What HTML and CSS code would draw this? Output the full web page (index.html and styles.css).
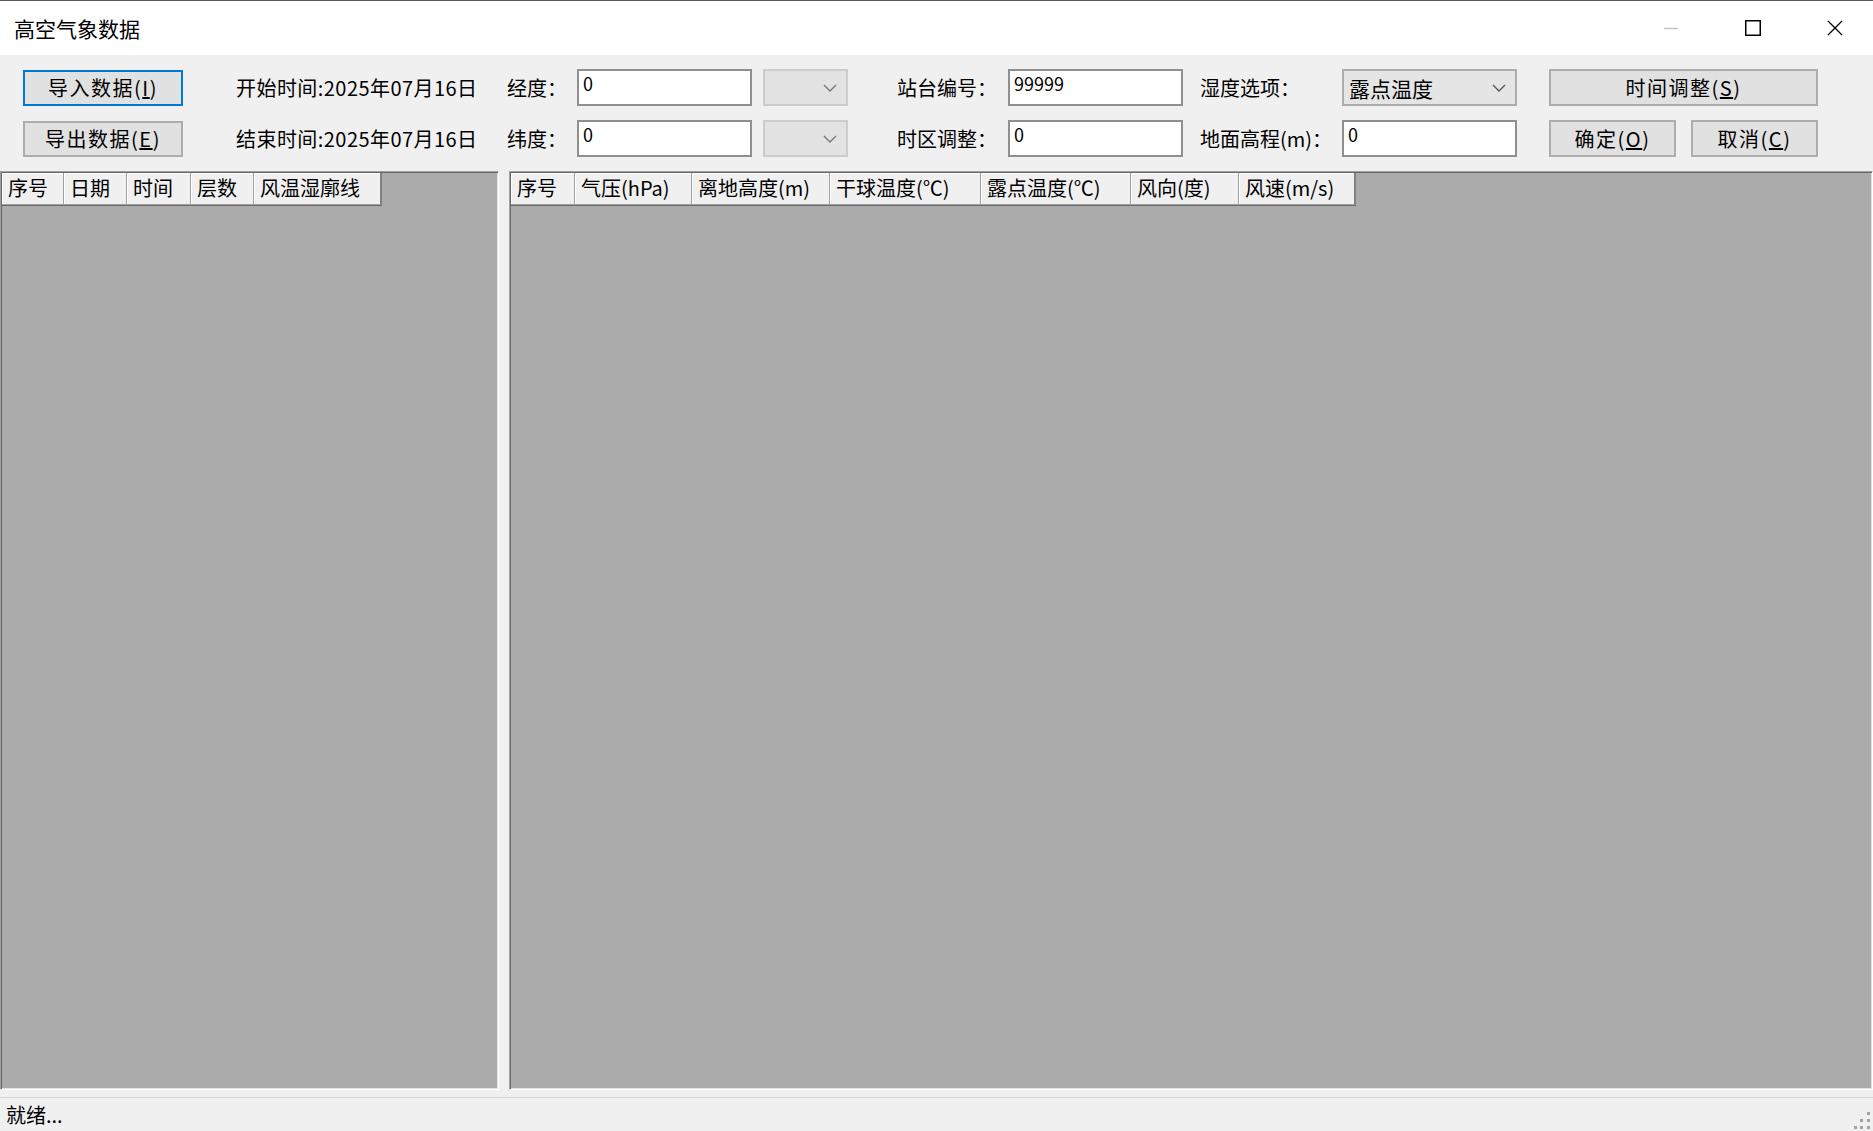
FILE: index.html
```html
<!DOCTYPE html>
<html lang="zh-CN">
<head>
    <meta charset="UTF-8">
    <title>高空气象数据</title>
    <link rel="stylesheet" href="styles.css">
</head>
<body>
    <div class="window">
        <div class="titlebar">
            <span class="title">高空气象数据</span>
            <div class="caption">
                <div class="cap-btn">
                    <svg width="16" height="16" viewBox="0 0 16 16"><line x1="1" y1="8.5" x2="15" y2="8.5" stroke="#c4c4c4" stroke-width="1.5"/></svg>
                </div>
                <div class="cap-btn">
                    <svg width="16" height="16" viewBox="0 0 16 16"><rect x="0.75" y="0.75" width="14.5" height="14.5" fill="none" stroke="#000" stroke-width="1.5"/></svg>
                </div>
                <div class="cap-btn">
                    <svg width="16" height="16" viewBox="0 0 16 16"><path d="M1 1 L15 15 M15 1 L1 15" stroke="#000" stroke-width="1.3"/></svg>
                </div>
            </div>
        </div>

        <div class="toolbar">
            <button class="btn btn-default">导入数据(<u>I</u>)</button>
            <span class="label pad-date">开始时间:2025年07月16日</span>
            <span class="label">经度：</span>
            <input class="field" type="text" value="0">
            <div class="combo combo-off pad-combo"><svg class="chev" width="14" height="8" viewBox="0 0 14 8"><path d="M1 1 L7 7 L13 1" fill="none" stroke="#777" stroke-width="1.4"/></svg></div>
            <span class="label pad-station">站台编号：</span>
            <input class="field" type="text" value="99999">
            <span class="label pad-hum">湿度选项：</span>
            <div class="combo"><span class="combo-text">露点温度</span><svg class="chev" width="14" height="8" viewBox="0 0 14 8"><path d="M1 1 L7 7 L13 1" fill="none" stroke="#555" stroke-width="1.4"/></svg></div>
            <div class="btn-cell"><button class="btn btn-wide">时间调整(<u>S</u>)</button></div>

            <button class="btn">导出数据(<u>E</u>)</button>
            <span class="label pad-date">结束时间:2025年07月16日</span>
            <span class="label">纬度：</span>
            <input class="field" type="text" value="0">
            <div class="combo combo-off pad-combo"><svg class="chev" width="14" height="8" viewBox="0 0 14 8"><path d="M1 1 L7 7 L13 1" fill="none" stroke="#777" stroke-width="1.4"/></svg></div>
            <span class="label pad-station">时区调整：</span>
            <input class="field" type="text" value="0">
            <span class="label pad-hum">地面高程(m)：</span>
            <input class="field" type="text" value="0">
            <div class="btn-cell btn-pair">
                <button class="btn">确定(<u>O</u>)</button>
                <button class="btn">取消(<u>C</u>)</button>
            </div>
        </div>

        <div class="main">
            <div class="panel panel-left">
                <div class="header">
                    <div class="col" style="width: 62px">序号</div>
                    <div class="col" style="width: 63px">日期</div>
                    <div class="col" style="width: 64px">时间</div>
                    <div class="col" style="width: 63px">层数</div>
                    <div class="col" style="width: 128px">风温湿廓线</div>
                </div>
            </div>
            <div class="panel panel-right">
                <div class="header">
                    <div class="col" style="width: 64px">序号</div>
                    <div class="col" style="width: 117px">气压(hPa)</div>
                    <div class="col" style="width: 138px">离地高度(m)</div>
                    <div class="col" style="width: 151px">干球温度(℃)</div>
                    <div class="col" style="width: 150px">露点温度(℃)</div>
                    <div class="col" style="width: 108px">风向(度)</div>
                    <div class="col" style="width: 117px">风速(m/s)</div>
                </div>
            </div>
        </div>

        <div class="statusbar">
            <span class="status-text">就绪...</span>
            <svg class="grip" width="16" height="18" viewBox="0 0 16 18">
                <rect x="13" y="1" width="3" height="3" fill="#a3a3a3"/>
                <rect x="6" y="8" width="3" height="3" fill="#a3a3a3"/>
                <rect x="13" y="8" width="3" height="3" fill="#a3a3a3"/>
                <rect x="0" y="15" width="3" height="3" fill="#a3a3a3"/>
                <rect x="6" y="15" width="3" height="3" fill="#a3a3a3"/>
                <rect x="13" y="15" width="3" height="3" fill="#a3a3a3"/>
            </svg>
        </div>
    </div>
</body>
</html>
```

FILE: styles.css
```css
body {
    margin: 0;
    background: #f0f0f0;
    font-family: "Noto Sans CJK SC", "Liberation Sans", sans-serif;
    color: #000;
    overflow: hidden;
}
.window {
    display: flex;
    flex-direction: column;
    width: 1873px;
    height: 1131px;
}
.titlebar {
    display: flex;
    align-items: center;
    height: 55px;
    box-sizing: border-box;
    background: #fff;
    border-top: 1px solid #5a5a5a;
}
.title {
    font-size: 21px;
    padding-left: 14px;
    flex: 1;
}
.caption {
    display: flex;
    height: 100%;
}
.cap-btn {
    width: 82px;
    display: flex;
    align-items: center;
    justify-content: center;
    padding-left: 6px;
    box-sizing: border-box;
}
.toolbar {
    display: grid;
    grid-template-columns: 160px 324px 70px 175px 96px 160px 175px 159px 175px 301px;
    grid-template-rows: 37px 37px;
    row-gap: 14px;
    align-items: center;
    height: 115px;
    box-sizing: border-box;
    padding: 14px 0 0 23px;
}
.label {
    font-size: 20px;
    white-space: nowrap;
}
.pad-date {
    padding-left: 53px;
    letter-spacing: 0.45px;
}
.pad-station {
    padding-left: 49px;
}
.pad-hum {
    padding-left: 17px;
}
.btn {
    height: 36px;
    width: 160px;
    background: #e1e1e1;
    border: 2px solid #adadad;
    font-family: "Noto Sans CJK SC", sans-serif;
    font-size: 20px;
    color: #000;
    padding: 0;
    letter-spacing: 1.5px;
}
.btn-default {
    border-color: #0078d7;
}
.btn-cell {
    padding-left: 32px;
    display: flex;
}
.btn-wide {
    width: 269px;
    height: 37px;
}
.btn-pair {
    gap: 15px;
}
.btn-pair .btn {
    width: 127px;
    height: 37px;
}
.field {
    height: 37px;
    width: 175px;
    box-sizing: border-box;
    border: 2px solid #8f8f8f;
    background: #fff;
    font-family: "Noto Sans CJK SC", sans-serif;
    font-size: 18px;
    padding: 0 0 9px 4px;
    margin: 0;
    outline: none;
}
.combo {
    position: relative;
    height: 37px;
    width: 175px;
    box-sizing: border-box;
    border: 2px solid #adadad;
    background: #e5e5e5;
    display: flex;
    align-items: center;
}
.combo-off {
    width: 85px;
    margin-left: 11px;
    border-color: #cccccc;
    background: #e2e2e2;
}
.combo-text {
    font-size: 21px;
    padding-left: 5px;
}
.chev {
    position: absolute;
    right: 9px;
    top: 13px;
}
.main {
    flex: 1;
    display: flex;
    gap: 10px;
    padding: 1px 0 7px 0;
    box-sizing: border-box;
}
.panel {
    background: #ababab;
    border: 1px solid;
    border-color: #a0a0a0 #ffffff #ffffff #a0a0a0;
    box-shadow: inset 1px 1px 0 #696969, inset -1px -1px 0 #e3e3e3;
    padding: 1px;
}
.panel-left {
    width: 499px;
    box-sizing: border-box;
}
.panel-right {
    flex: 1;
}
.header {
    display: flex;
    height: 32px;
}
.col {
    box-sizing: border-box;
    background: #f0f0f0;
    font-size: 20px;
    line-height: 30px;
    padding-left: 6px;
    white-space: nowrap;
    overflow: hidden;
    border-right: 1px solid #a0a0a0;
    border-bottom: 1px solid #a0a0a0;
    box-shadow: inset 1px 1px 0 #fff, 0 1px 0 #696969;
}
.col:last-child {
    border-right: 2px solid #808080;
}
.statusbar {
    height: 34px;
    box-sizing: border-box;
    border-top: 1px solid #d9d9d9;
    display: flex;
    align-items: center;
    justify-content: space-between;
    padding-left: 6px;
}
.status-text {
    font-size: 20px;
}
.grip {
    align-self: flex-end;
    margin-bottom: 2px;
    margin-right: 3px;
}
```
